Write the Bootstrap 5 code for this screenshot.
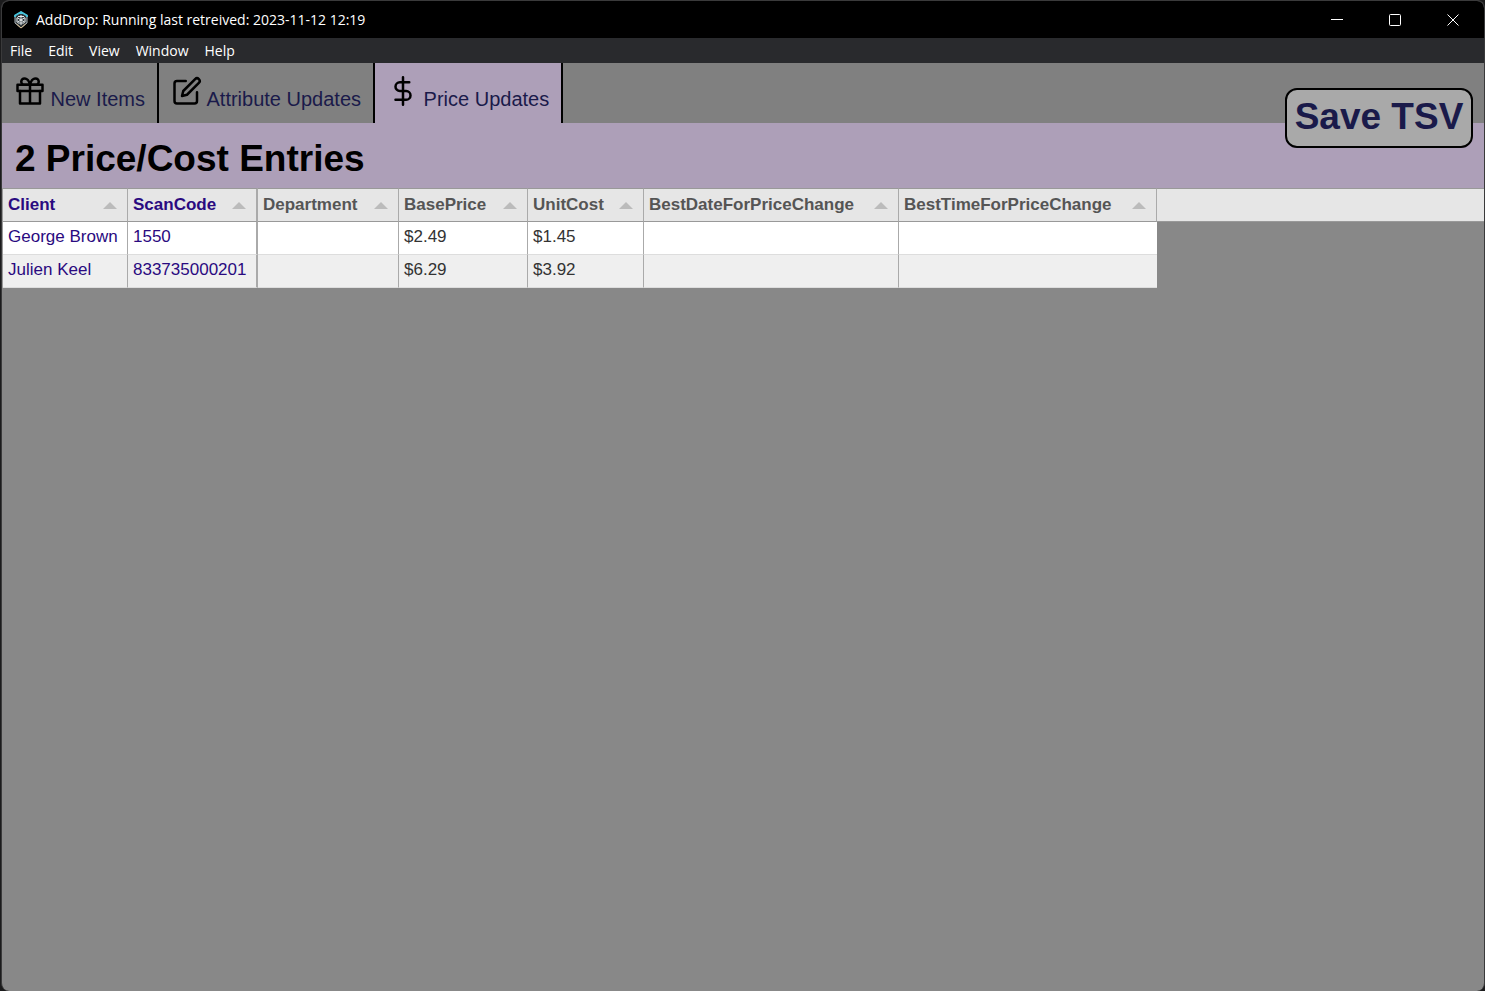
<!DOCTYPE html>
<html lang="en">
<head>
<meta charset="utf-8">
<meta name="viewport" content="width=device-width, initial-scale=1">
<title>AddDrop</title>
<link href="https://cdn.jsdelivr.net/npm/bootstrap@5.3.0/dist/css/bootstrap.min.css" rel="stylesheet">
<style>
  body { background: #1b1b1c; font-family: "Liberation Sans", Arial, sans-serif; color: #000; }
  .app-window { background: #888; border: 1px solid #3a3a3b; border-bottom: 0; border-radius: 8px; overflow: hidden; margin-left: 1px; }
  .title-bar, .menu-bar { font-family: "Open Sans", "Segoe UI", sans-serif; font-size: 14px; color: #fff; }
  .title-bar { background: #000; height: 37px; padding: 0 2px 0 11px; gap: 7px; }
  .win-btn { width: 58px; height: 37px; color: #fff; }
  .menu-bar { background: #292a2d; height: 25px; padding-left: 8px; gap: 16px; }
  .menu-bar a { color: #fff; line-height: 25px; }
  .tab-strip { background: #808080; }
  .tab-btn { height: 60px; padding: 4px 13px 0 13px; border: 0; border-right: 2px solid #000; background: none; color: #1a1a4a; font-size: 20px; line-height: 30px; white-space: nowrap; }
  .tab-btn svg { color: #000; vertical-align: baseline; }
  .tab-btn.active { background: #ad9fb8; }
  .tab-btn { padding-right: 12px; }
  .panel-head { background: #ad9fb8; height: 65px; padding: 0 11px 0 13px; }
  .panel-head h1 { font-size: 37px; line-height: 44px; font-weight: 700; padding-top: 14px; }
  .save-btn { margin-top: -35px; width: 188px; height: 60px; padding: 0 0 2px; border: 2px solid #000; border-radius: 12px; background: #a9a9a9; color: #1a1a4a; font-size: 37px; line-height: 44px; font-weight: 700; white-space: nowrap; }
  .grid-table { table-layout: fixed; width: 100%; font-size: 17px; line-height: 24px; border-collapse: separate; border-spacing: 0; border-left: 1px solid #999; color: #333; }
  .grid-table th, .grid-table td { height: 33px; padding: 0 5px; border-right: 1px solid #aaa; white-space: nowrap; }
  .grid-table th { height: 34px; background: #e6e6e6; border-top: 1px solid #999; border-bottom: 1px solid #999; color: #555; }
  .grid-table td { padding-bottom: 2px; background: #fff; border-bottom: 1px solid #ddd; }
  .grid-table tr:nth-child(even) td { background: #efefef; }
  .grid-table .frozen { color: #2a0a80; }
  .grid-table .frozen-end { border-right-width: 2px; }
  .grid-table .filler { border-right: 0; }
  .grid-table tr td.filler { background: none; border-bottom: 0; }
  .grid-table tr td:nth-last-child(2) { border-right: 0; }
  .sort-arrow { border: 7px solid transparent; border-top: 0; border-bottom-color: #bbb; margin-right: 5px; }
</style>
</head>
<body>
<div class="app-window min-vh-100">
  <header class="title-bar d-flex align-items-center">
    <svg width="16" height="18" viewBox="0 0 16 18" aria-hidden="true">
      <path d="M8 1 14 4.500V12L8 17 2 12V4.500Z" fill="#30383c" stroke="#aab2b6"/>
      <path d="M2 6V4.500L8 1l6 3.500V6" fill="none" stroke="#45c4dc" stroke-width="1.800"/>
      <path d="M3.500 13l4.500 4 4.500-4" fill="none" stroke="#d4b888"/>
      <path d="M8 4v10M4 6.500l8 5M12 6.500l-8 5M5 5.500h6M5 12h6M4 7v4M12 7v4" stroke="#e8eef0" fill="none"/>
    </svg>
    <span>AddDrop: Running last retreived: 2023-11-12 12:19</span>
    <div class="ms-auto d-flex">
      <button class="win-btn border-0 bg-transparent p-0" aria-label="Minimize"><svg class="d-block mx-auto" width="12" height="12" fill="none" stroke="currentColor"><path d="M0 5.500h12"/></svg></button>
      <button class="win-btn border-0 bg-transparent p-0" aria-label="Maximize"><svg class="d-block mx-auto" width="12" height="12" fill="none" stroke="currentColor"><rect x=".5" y=".5" width="11" height="11" rx="1"/></svg></button>
      <button class="win-btn border-0 bg-transparent p-0" aria-label="Close"><svg class="d-block mx-auto" width="12" height="12" fill="none" stroke="currentColor"><path d="M.5.5l11 11M11.500.5l-11 11"/></svg></button>
    </div>
  </header>
  <nav class="menu-bar d-flex" aria-label="Menu">
    <a class="text-decoration-none" href="#">File</a>
    <a class="text-decoration-none" href="#">Edit</a>
    <a class="text-decoration-none" href="#">View</a>
    <a class="text-decoration-none" href="#">Window</a>
    <a class="text-decoration-none" href="#">Help</a>
  </nav>
  <div class="tab-strip d-flex">
    <button class="tab-btn">
      <svg width="30" height="30" viewBox="0 0 24 24" fill="none" stroke="currentColor" stroke-width="2" stroke-linecap="round" stroke-linejoin="round"><rect x="2" y="7" width="20" height="5"/><path d="M20 12v10H4V12M12 22V7M12 7H7.500a2.500 2.500 0 0 1 0-5C11 2 12 7 12 7zM12 7h4.500a2.500 2.500 0 0 0 0-5C13 2 12 7 12 7z"/></svg>
      New Items</button>
    <button class="tab-btn">
      <svg width="30" height="30" viewBox="0 0 24 24" fill="none" stroke="currentColor" stroke-width="2" stroke-linecap="round" stroke-linejoin="round"><path d="M11 4H4a2 2 0 0 0-2 2v14a2 2 0 0 0 2 2h14a2 2 0 0 0 2-2v-7"/><path d="M18.500 2.500a2.121 2.121 0 0 1 3 3L12 15l-4 1 1-4 9.500-9.500z"/></svg>
      Attribute Updates</button>
    <button class="tab-btn active">
      <svg width="30" height="30" viewBox="0 0 24 24" fill="none" stroke="currentColor" stroke-width="2" stroke-linecap="round" stroke-linejoin="round"><path d="M12 1v22M17 5H9.500a3.500 3.500 0 0 0 0 7h5a3.500 3.500 0 0 1 0 7H6"/></svg>
      Price Updates</button>
  </div>
  <main>
    <div class="panel-head d-flex justify-content-between">
      <h1 class="mb-0">2 Price/Cost Entries</h1>
      <button class="save-btn">Save TSV</button>
    </div>
    <table class="grid-table">
      <colgroup><col style="width:125px"><col style="width:130px"><col style="width:141px"><col style="width:129px"><col style="width:116px"><col style="width:255px"><col style="width:258px"><col></colgroup>
      <thead>
        <tr>
          <th class="frozen"><div class="d-flex align-items-center justify-content-between">Client<span class="sort-arrow"></span></div></th>
          <th class="frozen frozen-end"><div class="d-flex align-items-center justify-content-between">ScanCode<span class="sort-arrow"></span></div></th>
          <th><div class="d-flex align-items-center justify-content-between">Department<span class="sort-arrow"></span></div></th>
          <th><div class="d-flex align-items-center justify-content-between">BasePrice<span class="sort-arrow"></span></div></th>
          <th><div class="d-flex align-items-center justify-content-between">UnitCost<span class="sort-arrow"></span></div></th>
          <th><div class="d-flex align-items-center justify-content-between">BestDateForPriceChange<span class="sort-arrow"></span></div></th>
          <th><div class="d-flex align-items-center justify-content-between">BestTimeForPriceChange<span class="sort-arrow"></span></div></th>
          <th class="filler"></th>
        </tr>
      </thead>
      <tbody>
        <tr><td class="frozen">George Brown</td><td class="frozen frozen-end">1550</td><td></td><td>$2.49</td><td>$1.45</td><td></td><td></td><td class="filler"></td></tr>
        <tr><td class="frozen">Julien Keel</td><td class="frozen frozen-end">833735000201</td><td></td><td>$6.29</td><td>$3.92</td><td></td><td></td><td class="filler"></td></tr>
      </tbody>
    </table>
  </main>
</div>
<script src="https://cdn.jsdelivr.net/npm/bootstrap@5.3.0/dist/js/bootstrap.bundle.min.js"></script>
</body>
</html>
